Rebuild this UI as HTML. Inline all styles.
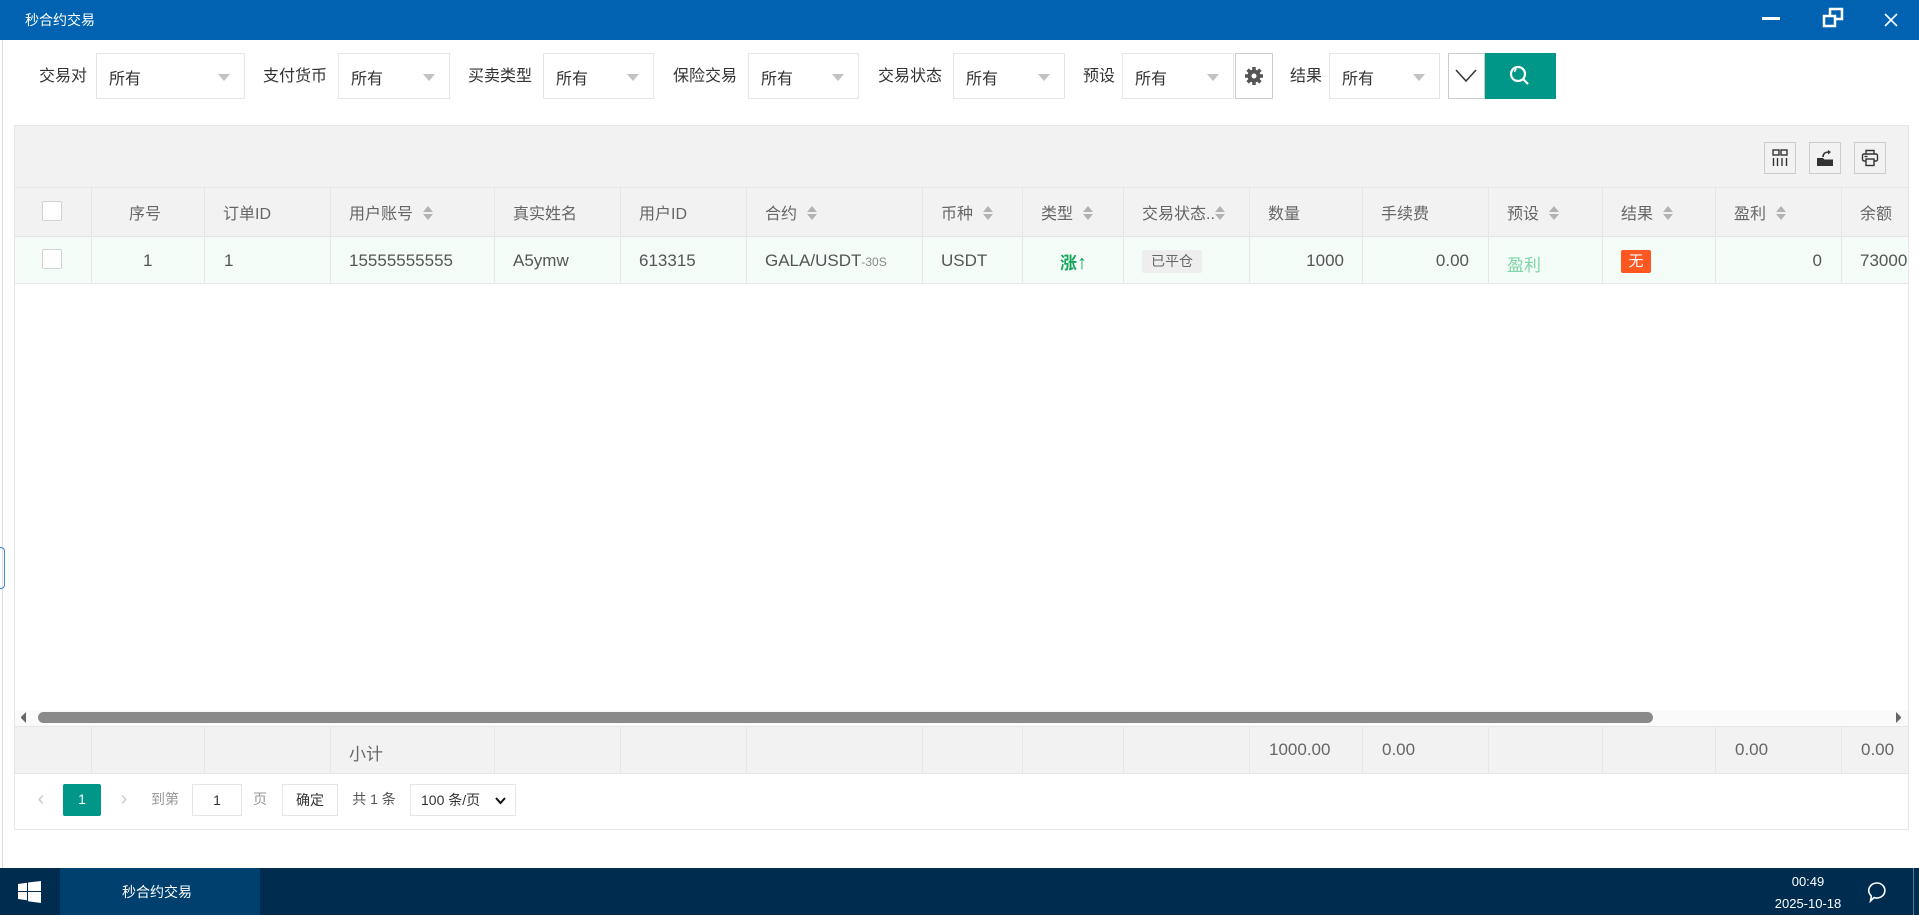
<!DOCTYPE html>
<html><head><meta charset="utf-8"><style>
*{margin:0;padding:0;box-sizing:border-box}
body{width:1919px;height:915px;position:relative;overflow:hidden;background:#fff;font-family:"Liberation Sans","Noto Sans CJK SC",sans-serif;color:#333}
.a{position:absolute}
.lbl{position:absolute;top:62px;font-size:16px;color:#333;white-space:nowrap}
.sel{position:absolute;top:53px;height:46px;border:1px solid #e6e6e6;background:#fff;font-size:16px;color:#333;padding:11px 0 0 12px}
.sel:after{content:"";position:absolute;right:14px;top:20px;border:6px solid transparent;border-top:7px solid #c2c2c2}
.vl{position:absolute;width:1px;background:#e6e6e6}
.t{position:absolute;font-size:16px;white-space:nowrap}
.h{top:200px;color:#666}
.d{top:251px;color:#555;font-size:17px}
.f{top:740px;color:#666;font-size:17px}
.sort{display:inline-block;position:relative;width:10px;height:14px;margin-left:10px;vertical-align:-1px}
.sort:before{content:"";position:absolute;left:0;top:0;border:5px solid transparent;border-bottom:6px solid #b2b2b2;border-top:0}
.sort:after{content:"";position:absolute;left:0;top:8px;border:5px solid transparent;border-top:6px solid #b2b2b2;border-bottom:0}
.cb{position:absolute;left:42px;width:20px;height:20px;border:1px solid #d2d2d2;border-radius:2px;background:#fff}
.ib{position:absolute;top:142px;width:32px;height:32px;border:1px solid #ccc}
.pg{position:absolute;top:784px;height:32px;font-size:14px;line-height:30px;text-align:center}
</style></head><body>
<div class="a" style="left:0;top:0;width:1919px;height:40px;background:#0062b0"></div>
<div class="a" style="left:25px;top:10px;color:#fff;font-size:14px">秒合约交易</div>
<div class="a" style="left:1762px;top:17px;width:18px;height:3px;background:#fff"></div>
<svg class="a" style="left:1822px;top:7px" width="24" height="22" viewBox="0 0 24 22" fill="none" stroke="#fff" stroke-width="2.5"><rect x="8" y="2" width="12" height="10"/><rect x="2" y="9" width="11" height="10" fill="#0062b0"/></svg>
<svg class="a" style="left:1883px;top:13px" width="16" height="14" viewBox="0 0 16 14" stroke="#fff" stroke-width="1.6"><path d="M2 1L14 13M14 1L2 13"/></svg>
<div class="a" style="left:2px;top:40px;width:1px;height:828px;background:#ddd"></div>
<div class="a" style="left:0;top:547px;width:5px;height:42px;border:1px solid #3a8ad6;border-left:0;border-radius:0 4px 4px 0"></div>

<div class="lbl" style="left:39px">交易对</div><div class="sel" style="left:96px;width:149px">所有</div>
<div class="lbl" style="left:263px">支付货币</div><div class="sel" style="left:338px;width:112px">所有</div>
<div class="lbl" style="left:468px">买卖类型</div><div class="sel" style="left:543px;width:111px">所有</div>
<div class="lbl" style="left:673px">保险交易</div><div class="sel" style="left:748px;width:111px">所有</div>
<div class="lbl" style="left:878px">交易状态</div><div class="sel" style="left:953px;width:112px">所有</div>
<div class="lbl" style="left:1083px">预设</div><div class="sel" style="left:1122px;width:112px">所有</div>
<div class="a" style="left:1235px;top:53px;width:38px;height:46px;border:1px solid #ccc;background:#fff"></div>
<svg class="a" style="left:1244px;top:66px" width="20" height="20" viewBox="0 0 20 20"><g fill="#555"><circle cx="10" cy="10" r="6.5"/><g stroke="#555" stroke-width="3.5"><path d="M10 1v18M1 10h18M3.6 3.6l12.8 12.8M16.4 3.6L3.6 16.4"/></g></g><circle cx="10" cy="10" r="2.5" fill="#fff"/></svg>
<div class="lbl" style="left:1290px">结果</div><div class="sel" style="left:1329px;width:111px">所有</div>
<div class="a" style="left:1448px;top:53px;width:37px;height:46px;border:1px solid #ccc;background:#fff"></div>
<svg class="a" style="left:1454px;top:66px" width="24" height="20" viewBox="0 0 24 20" fill="none" stroke="#333" stroke-width="1.5"><path d="M2 4l10 11 10-11"/></svg>
<div class="a" style="left:1485px;top:53px;width:71px;height:46px;background:#009688"></div>
<svg class="a" style="left:1508px;top:64px" width="24" height="24" viewBox="0 0 24 24" fill="none" stroke="#fff" stroke-width="2.2"><circle cx="10" cy="10" r="7"/><path d="M15 15l5 5"/><path d="M6.5 8a4 4 0 0 1 2-3" stroke-width="1.4"/></svg>

<div class="a" style="left:14px;top:125px;width:1895px;height:705px;border:1px solid #e6e6e6;background:#fff"></div>
<div class="a" style="left:15px;top:126px;width:1893px;height:62px;background:#f2f2f2;border-bottom:1px solid #e6e6e6"></div>
<div class="ib" style="left:1764px"></div><div class="ib" style="left:1809px"></div><div class="ib" style="left:1854px"></div>
<svg class="a" style="left:1771px;top:149px" width="18" height="18" viewBox="0 0 18 18" fill="none" stroke="#333" stroke-width="1.4"><rect x="2" y="1" width="6" height="5"/><rect x="10" y="1" width="6" height="5"/><path d="M2.5 9v8M6.5 9v8M11 9v8M15.5 9v8"/></svg>
<svg class="a" style="left:1816px;top:149px" width="18" height="18" viewBox="0 0 18 18"><path d="M1 9h6l1.5 1.5H17V17H1z" fill="#333"/><path d="M7 8c0-3 2-5 6-5" fill="none" stroke="#333" stroke-width="1.6"/><path d="M12 1l3 2-3 2.5z" fill="#333"/></svg>
<svg class="a" style="left:1861px;top:149px" width="18" height="18" viewBox="0 0 18 18" fill="none" stroke="#333" stroke-width="1.4"><path d="M5 5V1.5h8V5"/><rect x="1.5" y="5" width="15" height="7" rx="1.5"/><rect x="5" y="10" width="8" height="6.5" fill="#f2f2f2"/><path d="M3.5 7.5h3"/></svg>

<div class="a" style="left:15px;top:188px;width:1893px;height:49px;background:#f2f2f2;border-bottom:1px solid #e6e6e6"></div>
<div class="a" style="left:15px;top:237px;width:1893px;height:47px;background:#f4fcf8;border-bottom:1px solid #e6e6e6"></div>
<div class="a" style="left:15px;top:726px;width:1893px;height:48px;background:#f2f2f2;border-top:1px solid #e6e6e6;border-bottom:1px solid #e6e6e6"></div>
<div class="vl" style="left:91px;top:188px;height:96px"></div><div class="vl" style="left:91px;top:726px;height:48px"></div>
<div class="vl" style="left:204px;top:188px;height:96px"></div><div class="vl" style="left:204px;top:726px;height:48px"></div>
<div class="vl" style="left:330px;top:188px;height:96px"></div><div class="vl" style="left:330px;top:726px;height:48px"></div>
<div class="vl" style="left:494px;top:188px;height:96px"></div><div class="vl" style="left:494px;top:726px;height:48px"></div>
<div class="vl" style="left:620px;top:188px;height:96px"></div><div class="vl" style="left:620px;top:726px;height:48px"></div>
<div class="vl" style="left:746px;top:188px;height:96px"></div><div class="vl" style="left:746px;top:726px;height:48px"></div>
<div class="vl" style="left:922px;top:188px;height:96px"></div><div class="vl" style="left:922px;top:726px;height:48px"></div>
<div class="vl" style="left:1022px;top:188px;height:96px"></div><div class="vl" style="left:1022px;top:726px;height:48px"></div>
<div class="vl" style="left:1123px;top:188px;height:96px"></div><div class="vl" style="left:1123px;top:726px;height:48px"></div>
<div class="vl" style="left:1249px;top:188px;height:96px"></div><div class="vl" style="left:1249px;top:726px;height:48px"></div>
<div class="vl" style="left:1362px;top:188px;height:96px"></div><div class="vl" style="left:1362px;top:726px;height:48px"></div>
<div class="vl" style="left:1488px;top:188px;height:96px"></div><div class="vl" style="left:1488px;top:726px;height:48px"></div>
<div class="vl" style="left:1602px;top:188px;height:96px"></div><div class="vl" style="left:1602px;top:726px;height:48px"></div>
<div class="vl" style="left:1715px;top:188px;height:96px"></div><div class="vl" style="left:1715px;top:726px;height:48px"></div>
<div class="vl" style="left:1841px;top:188px;height:96px"></div><div class="vl" style="left:1841px;top:726px;height:48px"></div>

<div class="cb" style="top:201px"></div>
<div class="cb" style="top:249px"></div>
<div class="t h" style="left:129px">序号</div>
<div class="t h" style="left:223px">订单ID</div>
<div class="t h" style="left:349px">用户账号<span class="sort"></span></div>
<div class="t h" style="left:513px">真实姓名</div>
<div class="t h" style="left:639px">用户ID</div>
<div class="t h" style="left:765px">合约<span class="sort"></span></div>
<div class="t h" style="left:941px">币种<span class="sort"></span></div>
<div class="t h" style="left:1041px">类型<span class="sort"></span></div>
<div class="t h" style="left:1142px">交易状态..<span class="sort" style="margin-left:0"></span></div>
<div class="t h" style="left:1268px">数量</div>
<div class="t h" style="left:1381px">手续费</div>
<div class="t h" style="left:1507px">预设<span class="sort"></span></div>
<div class="t h" style="left:1621px">结果<span class="sort"></span></div>
<div class="t h" style="left:1734px">盈利<span class="sort"></span></div>
<div class="t h" style="left:1860px">余额</div>

<div class="t d" style="left:143px">1</div>
<div class="t d" style="left:224px">1</div>
<div class="t d" style="left:349px">15555555555</div>
<div class="t d" style="left:513px">A5ymw</div>
<div class="t d" style="left:639px">613315</div>
<div class="t d" style="left:765px">GALA/USDT<span style="font-size:12px;color:#888">-30S</span></div>
<div class="t d" style="left:941px">USDT</div>
<div class="t d" style="left:1060px;color:#16a35a;font-weight:bold;top:249px;font-size:17px">涨<span style="font-weight:normal;font-size:20px">↑</span></div>
<div class="a" style="left:1142px;top:250px;width:60px;height:23px;background:#eee;border-radius:2px;font-size:14px;color:#666;text-align:center;line-height:23px">已平仓</div>
<div class="t d" style="left:1249px;width:95px;text-align:right">1000</div>
<div class="t d" style="left:1362px;width:107px;text-align:right">0.00</div>
<div class="t d" style="left:1507px;color:#7ed6a6">盈利</div>
<div class="a" style="left:1621px;top:250px;width:30px;height:23px;background:#ff5722;border-radius:2px;font-size:15px;color:#fff;text-align:center;line-height:23px">无</div>
<div class="t d" style="left:1715px;width:107px;text-align:right">0</div>
<div class="t d" style="left:1860px">73000</div>

<div class="a" style="left:15px;top:710px;width:1893px;height:16px;background:#fafafa"></div>
<div class="a" style="left:38px;top:712px;width:1615px;height:11px;background:#8a8a8a;border-radius:6px"></div>
<div class="a" style="left:21px;top:712px;border:5px solid transparent;border-right:5px solid #666;border-left:0;height:11px"></div>
<div class="a" style="left:1896px;top:712px;border:5px solid transparent;border-left:5px solid #666;border-right:0;height:11px"></div>

<div class="t f" style="left:349px">小计</div>
<div class="t f" style="left:1269px">1000.00</div>
<div class="t f" style="left:1382px">0.00</div>
<div class="t f" style="left:1735px">0.00</div>
<div class="t f" style="left:1861px">0.00</div>

<div class="pg" style="left:33px;width:16px;color:#ccc;font-size:20px">‹</div>
<div class="pg" style="left:63px;width:38px;background:#009688;color:#fff;border-radius:2px">1</div>
<div class="pg" style="left:116px;width:16px;color:#ccc;font-size:20px">›</div>
<div class="pg" style="left:148px;width:34px;color:#999">到第</div>
<div class="pg" style="left:192px;width:50px;border:1px solid #e6e6e6;color:#333">1</div>
<div class="pg" style="left:252px;width:16px;color:#999">页</div>
<div class="pg" style="left:282px;width:56px;border:1px solid #e6e6e6;color:#333">确定</div>
<div class="pg" style="left:349px;width:50px;color:#555">共 1 条</div>
<div class="pg" style="left:410px;width:106px;border:1px solid #e6e6e6;color:#333;text-align:left;padding-left:10px">100 条/页<svg style="position:absolute;right:9px;top:12px" width="11" height="8" viewBox="0 0 11 8" fill="none" stroke="#111" stroke-width="2"><path d="M1 1l4.5 5L10 1"/></svg></div>

<div class="a" style="left:0;top:868px;width:1919px;height:47px;background:#002c4f"></div>
<div class="a" style="left:60px;top:868px;width:200px;height:47px;background:#00406f"></div>
<svg class="a" style="left:18px;top:881px" width="23" height="22" viewBox="0 0 23 22" fill="#fff"><path d="M0 3l9-1.3V10H0zM10 1.5L23 0v10H10zM0 11h9v8.3L0 18zM10 11h13v11l-13-1.7z"/></svg>
<div class="a" style="left:122px;top:882px;color:#fff;font-size:14px">秒合约交易</div>
<div class="a" style="left:1770px;top:874px;width:76px;text-align:center;color:#fff;font-size:13px;white-space:nowrap">00:49</div>
<div class="a" style="left:1770px;top:896px;width:76px;text-align:center;color:#fff;font-size:13px;white-space:nowrap">2025-10-18</div>
<svg class="a" style="left:1866px;top:881px" width="22" height="22" viewBox="0 0 22 22" fill="none" stroke="#fff" stroke-width="1.6"><path d="M11 2a8 7.5 0 1 1-3 14.5L4.5 20l.8-5A8 7.5 0 0 1 11 2z"/></svg>
<div class="a" style="left:1913px;top:868px;width:1px;height:47px;background:#5a7690"></div>
</body></html>
